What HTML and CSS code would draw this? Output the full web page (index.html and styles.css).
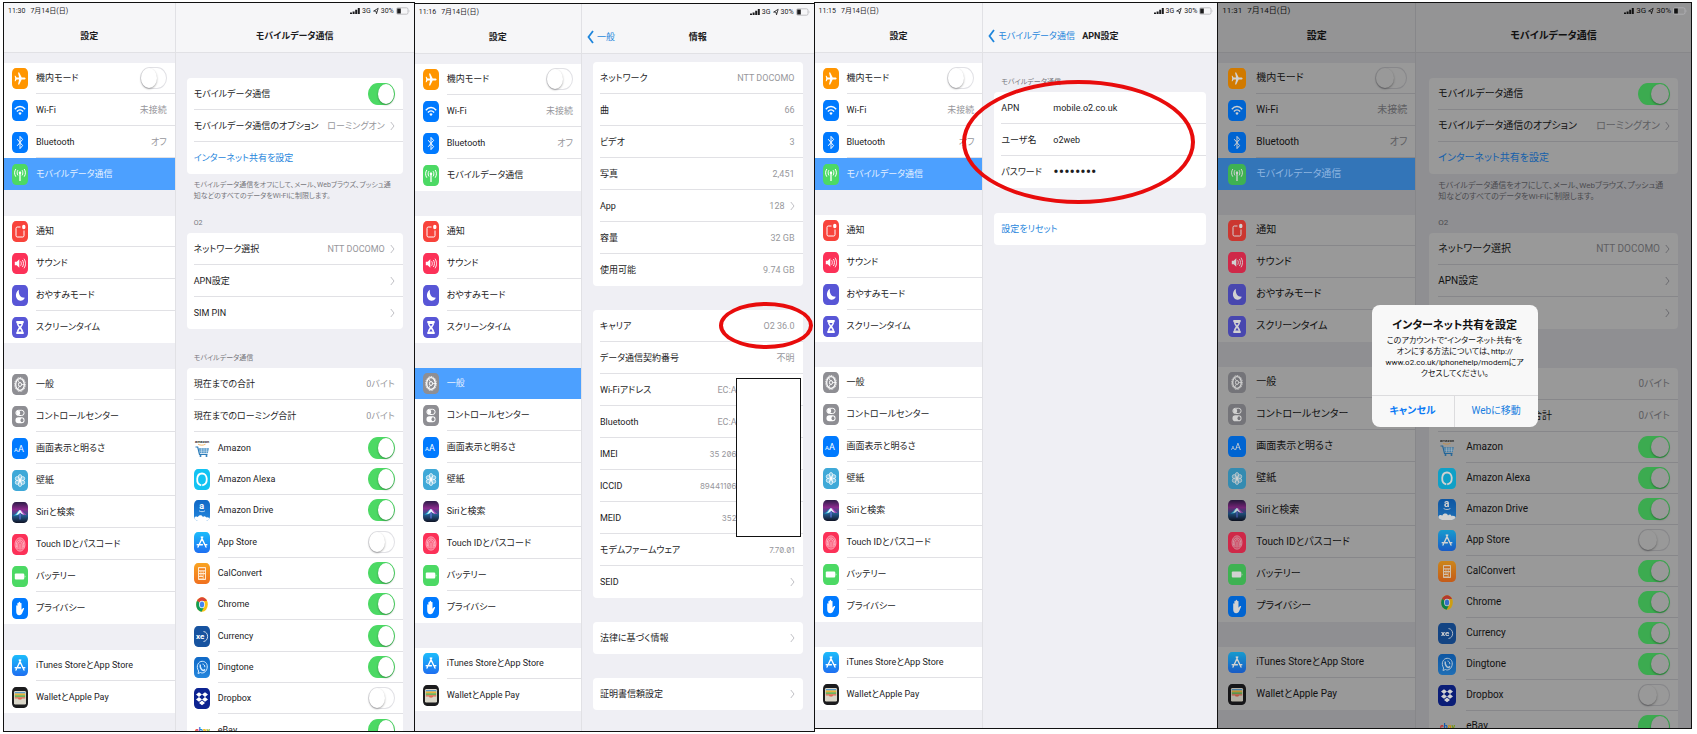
FILE: index.html
```
<!DOCTYPE html>
<html lang="ja">
<head>
    <meta charset="UTF-8">
    <meta name="viewport" content="width=device-width, initial-scale=1.0">
    <title>APN設定</title>
    <link rel="stylesheet" href="styles.css">
</head>
<body>
    <!-- icon glyphs, the coloured tile behind each one is in the css -->
    <svg class="sprite" aria-hidden="true">
        <symbol id="plane" viewBox="0 0 16 21"><path fill="#fff" d="M13.6 10.5c0 .7-.8 1-1.6 1H9.7L7.2 16.5H6l1.1-5H4.6l-1.1 1.7h-.8l.5-2.7-.5-2.7h.8l1.1 1.7h2.5l-1.1-5h1.2l2.5 5H12c.8 0 1.6.3 1.6 1z"/></symbol>
        <symbol id="wifi" viewBox="0 0 16 21"><g fill="none" stroke="#fff" stroke-width="1.4"><path d="M2.8 9.2c3.1-3.6 7.3-3.6 10.4 0"/><path d="M4.9 11.5c1.9-2.2 4.3-2.2 6.2 0"/></g><path fill="#fff" d="M6.4 13.1c1-1 2.2-1 3.2 0L8 15.2z"/></symbol>
        <symbol id="bluetooth" viewBox="0 0 16 21"><path fill="none" stroke="#fff" d="M5.2 7.2l5.4 6.4-2.6 3V4.4l2.6 3-5.4 6.4"/></symbol>
        <symbol id="antenna" viewBox="0 0 16 21"><g fill="none" stroke="#fff"><path d="M8 9.5V17" stroke-width="1.3"/><path d="M5.9 6.2c-1 1.6-1 3.6 0 5.2M10.1 6.2c1 1.6 1 3.6 0 5.2M3.8 5c-1.6 2.5-1.6 5.2 0 7.7M12.2 5c1.6 2.5 1.6 5.2 0 7.7"/></g><ellipse cx="8" cy="8.8" rx="1.2" ry="1.5" fill="#fff"/></symbol>
        <symbol id="notice" viewBox="0 0 16 21"><path fill="none" stroke="#fff" d="M8.5 6H5.2c-.7 0-1.2.5-1.2 1.4v7.2c0 .9.5 1.4 1.2 1.4h5.6c.7 0 1.2-.5 1.2-1.400V9.500"/><ellipse cx="11.8" cy="6" rx="1.7" ry="2.2" fill="#fff"/></symbol>
        <symbol id="sound" viewBox="0 0 16 21"><path fill="#fff" d="M2.8 8.8h1.9l2.6-2.6v8.6l-2.6-2.6H2.8z"/><path fill="none" stroke="#fff" stroke-width=".9" d="M8.7 8.3c.8 1.4.8 3 0 4.4M10.4 7c1.4 2.2 1.4 4.8 0 7M12 5.7c2 3 2 6.600 0 9.600"/></symbol>
        <symbol id="moon" viewBox="0 0 16 21"><path fill="#fff" d="M6.9 4.8c-.6 4.6 1.4 8.1 5.9 8-.9 2.3-2.6 3.2-4.6 3C3.4 15.2 2.2 8 6.9 4.8z"/></symbol>
        <symbol id="hourglass" viewBox="0 0 16 21"><path fill="#fff" d="M4.3 4h7.4v2.2h-.8v1.6l-1.7 2.7 1.7 2.7v1.6h.8V17H4.3v-2.2h.8v-1.6l1.7-2.7-1.7-2.7V6.2h-.8z"/><path fill="#5856d6" d="M6.4 7h3.2L8 9.6zM8 11.8l1.7 2.8H6.3z"/></symbol>
        <symbol id="gear" viewBox="0 0 16 21"><g fill="none" stroke="#fff"><ellipse cx="8" cy="10.5" rx="5.3" ry="7" stroke-dasharray="1 .8"/><ellipse cx="8" cy="10.5" rx="4.3" ry="5.8" stroke-width="1.3"/><ellipse cx="8" cy="10.5" rx="1.5" ry="2"/><path d="M9.5 10.5h2.8M7.2 8.7L5.8 5.8M7.2 12.3l-1.4 2.9" stroke-width=".8"/></g></symbol>
        <symbol id="control" viewBox="0 0 16 21"><rect x="3.9" y="4.3" width="8.2" height="5.2" rx="2.5" fill="none" stroke="#fff"/><ellipse cx="6.2" cy="6.9" rx="2" ry="2.4" fill="#fff"/><rect x="3.5" y="11.3" width="9" height="6" rx="2.8" fill="#fff"/><ellipse cx="10" cy="14.3" rx="1.5" ry="2" fill="#8e8e93"/></symbol>
        <symbol id="wallpaper" viewBox="0 0 16 21"><g fill="#fff" fill-opacity=".35" stroke="#fff" stroke-width=".7"><ellipse cx="8" cy="6.8" rx="1.7" ry="2.3"/><ellipse cx="8" cy="14.2" rx="1.7" ry="2.3"/><ellipse cx="5.2" cy="8.6" rx="1.9" ry="2"/><ellipse cx="10.8" cy="8.6" rx="1.9" ry="2"/><ellipse cx="5.2" cy="12.4" rx="1.9" ry="2"/><ellipse cx="10.8" cy="12.4" rx="1.9" ry="2"/></g><ellipse cx="8" cy="10.5" rx="1.3" ry="1.7" fill="#fff"/></symbol>
        <symbol id="siri" viewBox="0 0 16 21"><path fill="#22c3e8" opacity=".8" d="M1 13.5c3-.5 4.5-5 7-5.5 1.5 2 0 6-7 5.5z"/><path fill="#d94ad0" opacity=".8" d="M8 8c2.5 0 3.5 3.5 6.5 4.5-3 .7-5.5 0-6.5-4.500z"/><path fill="#e9fbff" d="M3.5 12.8c2-.5 3-4.5 4.5-4.800 1.300.6 2 3.600 4 4.500-1.700.3-2.800-.8-3.600-1.700-1.200 1.300-2.900 2.300-4.900 2z"/><path stroke="#6d7ef0" d="M8 11.5v6"/></symbol>
        <symbol id="touch" viewBox="0 0 16 21"><g fill="none" stroke="#ffb9c6" stroke-width=".8"><ellipse cx="8" cy="10.5" rx="5" ry="6.7"/><path d="M4.6 13.5c-.8-5 .7-7.5 3.4-7.5s4.2 2.5 3.6 7.5M6.1 15c-1-5 0-7.2 1.9-7.2s2.7 2.2 2 7.4M8 9.7v5.8"/></g><ellipse cx="8" cy="10.5" rx="4.8" ry="6.5" fill="#fff" opacity=".2"/></symbol>
        <symbol id="battery" viewBox="0 0 16 21"><rect x="2.8" y="7.6" width="9.4" height="5.8" rx="1" fill="#fff"/><path fill="#fff" d="M12.7 9.3c.9.3.9 2.1 0 2.4z"/></symbol>
        <symbol id="hand" viewBox="0 0 16 21"><path fill="#fff" d="M4.2 8c0-1 1.1-1 1.2 0V5.5c0-1 1.2-1 1.3 0V4.4c0-1 1.3-1 1.4 0v1c0-1 1.3-1 1.4 0v6.3l1.3-1.5c.8-.6 1.7 0 1.2.9L10 15.5c-.7 1.3-1.5 1.7-2.7 1.7-2 0-3.1-1.6-3.1-4z"/></symbol>
        <symbol id="store" viewBox="0 0 16 21"><g fill="none" stroke="#fff" stroke-width="1.4" stroke-linecap="round"><path d="M8.7 5L5 13M7.3 5L11 13M3.2 12.7h5.2M10.7 12.7h2.1M4 15l.4-.8M12 15l-.4-.8"/></g></symbol>
        <symbol id="wallet" viewBox="0 0 16 21"><rect x="2" y="4" width="12" height="13.5" rx="1.2" fill="#d9d6c8"/><path fill="#5a9bc9" d="M2.8 5h10.4v1.6H2.8z"/><path fill="#e8b33a" d="M2.8 6.6h10.4v2H2.8z"/><path fill="#6fb35a" d="M2.8 8.2h10.4v2H2.8z"/><path fill="#e46a52" d="M2.8 10.2h10.4v1.4H10c-.5 1.6-3.5 1.6-4 0H2.8z"/></symbol>

        <symbol id="alexa" viewBox="0 0 16 21"><path fill="none" stroke="#fff" stroke-width="1.8" d="M7.3 16.4C1.3 15 2.2 4.5 8 4.5s6.8 10.3.2 11.8"/></symbol>
        <symbol id="calc" viewBox="0 0 16 21"><rect x="4" y="4" width="8" height="13" rx=".8" fill="#ffe9cf"/><path fill="#f38320" d="M5 5.2h6v2H5zM5 8.5h1.6V10H5zM7.3 8.5h1.5V10H7.3zM9.5 8.5H11V10H9.5zM5 11.2h1.6v1.5H5zM7.3 11.2h1.5v1.5H7.3zM9.5 11.2H11v4.5H9.5zM5 14h3.8v1.6H5z"/></symbol>
        <symbol id="chrome" viewBox="0 0 16 21"><ellipse cx="8" cy="10.5" rx="5.8" ry="7.3" fill="#fbc116"/><path fill="#db4437" d="M8 10.5L3 6.8C5.5 2 10.8 2 13 7H8z"/><path fill="#0f9d58" d="M3 6.8c-2 4.5-.2 10.3 4.6 11L10 13l-2-2.5z"/><ellipse cx="8" cy="10.5" rx="2.9" ry="3.7" fill="#fff"/><ellipse cx="8" cy="10.5" rx="2.2" ry="2.9" fill="#4285f4"/></symbol>
        <symbol id="dingtone" viewBox="0 0 16 21"><g fill="none" stroke="#d8ecff"><path d="M4 16.5l.6-2.5C1.5 9 4.5 4.3 8.2 4.3S14 7.5 13 11.5s-4.5 5.2-6.5 4z"/><path stroke-width="1.5" d="M6.3 7.5c-.6 3 1.2 5.8 3.6 6l1-1.2"/><path d="M8.5 7c1.5.2 2.4 1.5 2.3 3.2"/></g></symbol>
        <symbol id="dropbox" viewBox="0 0 16 21"><path fill="#fff" d="M5 4.2L8 6.6 5 9 2 6.6zM11 4.2l3 2.4L11 9 8 6.6zM5 9l3 2.4-3 2.4-3-2.4zM11 9l3 2.4-3 2.4-3-2.4zM8 12.6l3 2.3-3 2.4-3-2.4z"/></symbol>

        <symbol id="chevron" viewBox="0 0 5 10"><path fill="none" stroke="currentColor" d="M.8 1L4 5 .8 9"/></symbol>
        <symbol id="back" viewBox="0 0 7 14"><path fill="none" stroke="currentColor" stroke-width="1.8" d="M6 1L1.5 7 6 13"/></symbol>
        <symbol id="signal" viewBox="0 0 10 8"><path fill="currentColor" d="M0 5.5h2V7H0zM2.6 4.5h2V7h-2zM5.2 2.8h2V7h-2zM7.8 1h2v6h-2z"/></symbol>
        <symbol id="arrow" viewBox="0 0 6 8"><path fill="none" stroke="currentColor" stroke-width=".8" d="M.6 4.1L5.2 1.3 3.5 6.8 3 4.1z"/></symbol>
        <symbol id="charge" viewBox="0 0 14 8"><rect x=".5" y=".8" width="11.5" height="6.4" rx="1.5" fill="none" stroke="#b4b4b8" stroke-width=".8"/><rect x="1.2" y="1.5" width="3.6" height="5" fill="currentColor"/><path fill="#b4b4b8" d="M12.8 3c.9.3.9 1.7 0 2z"/></symbol>
    </svg>

    <template id="statusTemplate">
        <svg class="signal"><use href="#signal"/></svg>
        <span>3G</span>
        <svg class="arrow"><use href="#arrow"/></svg>
        <span>30%</span>
        <svg class="charge"><use href="#charge"/></svg>
    </template>

    <template id="menuTemplate">
        <div class="group">
            <label class="row"><span class="icon orange"><svg><use href="#plane"/></svg></span><span class="body">機内モード<input type="checkbox" class="switch"></span></label>
            <a class="row" href="#"><span class="icon blue"><svg><use href="#wifi"/></svg></span><span class="body">Wi-Fi<span class="value">未接続</span></span></a>
            <a class="row" href="#"><span class="icon blue"><svg><use href="#bluetooth"/></svg></span><span class="body">Bluetooth<span class="value">オフ</span></span></a>
            <a class="row" href="#" data-page="mobile"><span class="icon green"><svg><use href="#antenna"/></svg></span><span class="body">モバイルデータ通信</span></a>
        </div>
        <div class="group">
            <a class="row" href="#"><span class="icon red"><svg><use href="#notice"/></svg></span><span class="body">通知</span></a>
            <a class="row" href="#"><span class="icon pink"><svg><use href="#sound"/></svg></span><span class="body">サウンド</span></a>
            <a class="row" href="#"><span class="icon purple"><svg><use href="#moon"/></svg></span><span class="body">おやすみモード</span></a>
            <a class="row" href="#"><span class="icon purple"><svg><use href="#hourglass"/></svg></span><span class="body">スクリーンタイム</span></a>
        </div>
        <div class="group">
            <a class="row" href="#" data-page="general"><span class="icon gray"><svg><use href="#gear"/></svg></span><span class="body">一般</span></a>
            <a class="row" href="#"><span class="icon gray"><svg><use href="#control"/></svg></span><span class="body">コントロールセンター</span></a>
            <a class="row" href="#"><span class="icon blue"><svg viewBox="0 0 16 21"><text x="2" y="14" fill="#fff" font-size="9"><tspan font-size="6">A</tspan>A</text></svg></span><span class="body">画面表示と明るさ</span></a>
            <a class="row" href="#"><span class="icon sky"><svg><use href="#wallpaper"/></svg></span><span class="body">壁紙</span></a>
            <a class="row" href="#"><span class="icon siri"><svg><use href="#siri"/></svg></span><span class="body">Siriと検索</span></a>
            <a class="row" href="#"><span class="icon pink"><svg><use href="#touch"/></svg></span><span class="body">Touch IDとパスコード</span></a>
            <a class="row" href="#"><span class="icon green"><svg><use href="#battery"/></svg></span><span class="body">バッテリー</span></a>
            <a class="row" href="#"><span class="icon blue"><svg><use href="#hand"/></svg></span><span class="body">プライバシー</span></a>
        </div>
        <div class="group">
            <a class="row" href="#"><span class="icon store"><svg><use href="#store"/></svg></span><span class="body">iTunes StoreとApp Store</span></a>
            <a class="row" href="#"><span class="icon black"><svg><use href="#wallet"/></svg></span><span class="body">WalletとApple Pay</span></a>
        </div>
    </template>

    <template id="mobileTemplate">
        <div class="card">
            <label class="row"><span class="body">モバイルデータ通信<input type="checkbox" class="switch" checked></span></label>
            <a class="row" href="#"><span class="body">モバイルデータ通信のオプション<span class="value">ローミングオン</span><svg class="chevron"><use href="#chevron"/></svg></span></a>
            <a class="row link" href="#"><span class="body">インターネット共有を設定</span></a>
        </div>
        <p class="note">モバイルデータ通信をオフにして、メール、Webブラウズ、プッシュ通<br>知などのすべてのデータをWi-Fiに制限します。</p>
        <h3 class="carrier">O2</h3>
        <div class="card">
            <a class="row" href="#"><span class="body">ネットワーク選択<span class="value">NTT DOCOMO</span><svg class="chevron"><use href="#chevron"/></svg></span></a>
            <a class="row" href="#"><span class="body">APN設定<svg class="chevron"><use href="#chevron"/></svg></span></a>
            <a class="row" href="#"><span class="body">SIM PIN<svg class="chevron"><use href="#chevron"/></svg></span></a>
        </div>
        <h3 class="usage">モバイルデータ通信</h3>
        <div class="card">
            <div class="row"><span class="body">現在までの合計<span class="value">0バイト</span></span></div>
            <div class="row"><span class="body">現在までのローミング合計<span class="value">0バイト</span></span></div>
            <label class="row app"><span class="icon"><svg viewBox="0 0 16 21"><text x="1" y="5" font-size="4" font-weight="bold" fill="#333">amazon</text><path fill="none" stroke="#f3a847" stroke-width=".8" d="M4 6.2c2.500 1.300 5 1.300 7.500 0"/><path fill="none" stroke="#2b7bb9" stroke-width="1.2" d="M1.500 9h2.200l1.800 7.500h8"/><path fill="#4b93c7" d="M4.500 10.300H15l-1.200 5H5.600z"/><path stroke="#fff" stroke-width=".4" d="M5 12h9.500M5.500 13.700h9M7.500 10.300v5M10 10.300v5M12.500 10.300v5"/><circle cx="6.500" cy="18" r="1" fill="#2b7bb9"/><circle cx="12.500" cy="18" r="1" fill="#2b7bb9"/></svg></span><span class="body">Amazon<input type="checkbox" class="switch" checked></span></label>
            <label class="row app"><span class="icon cyan"><svg><use href="#alexa"/></svg></span><span class="body">Amazon Alexa<input type="checkbox" class="switch" checked></span></label>
            <label class="row app"><span class="icon drive"><svg viewBox="0 0 16 21" preserveAspectRatio="xMidYMax slice"><text x="5.300" y="9" fill="#fff" font-size="9" font-weight="bold">a</text><path fill="none" stroke="#fff" stroke-width=".7" d="M5 10.800c2 1.200 4 1.200 6 0"/><path fill="#fff" d="M0 21v-2.500c1-2.500 2.700-2.300 3.900-1.500 1-2.300 4.200-2.300 5 0 1.300-1.500 2.800-.8 3.200.6 1.500-.8 3.300.2 3.900 1.400v2z"/></svg></span><span class="body">Amazon Drive<input type="checkbox" class="switch" checked></span></label>
            <label class="row app"><span class="icon store"><svg><use href="#store"/></svg></span><span class="body">App Store<input type="checkbox" class="switch"></span></label>
            <label class="row app"><span class="icon calc"><svg><use href="#calc"/></svg></span><span class="body">CalConvert<input type="checkbox" class="switch" checked></span></label>
            <label class="row app"><span class="icon"><svg><use href="#chrome"/></svg></span><span class="body">Chrome<input type="checkbox" class="switch" checked></span></label>
            <label class="row app"><span class="icon xe"><svg viewBox="0 0 16 21"><text x="2" y="13" fill="#fff" font-size="8" font-weight="bold">xe</text><path fill="none" stroke="#fff" stroke-width=".8" d="M9.500 5.500c5.500.5 5.500 9.500 0 10"/></svg></span><span class="body">Currency<input type="checkbox" class="switch" checked></span></label>
            <label class="row app"><span class="icon drive"><svg><use href="#dingtone"/></svg></span><span class="body">Dingtone<input type="checkbox" class="switch" checked></span></label>
            <label class="row app"><span class="icon navy"><svg><use href="#dropbox"/></svg></span><span class="body">Dropbox<input type="checkbox" class="switch"></span></label>
            <label class="row app"><span class="icon"><svg viewBox="0 0 16 21"><text x="1" y="13" font-size="7" font-weight="bold"><tspan fill="#e53238">e</tspan><tspan fill="#0064d2">b</tspan><tspan fill="#f5af02">a</tspan><tspan fill="#86b817">y</tspan></text></svg></span><span class="body">eBay<input type="checkbox" class="switch" checked></span></label>
        </div>
    </template>

    <main class="shots">
        <section class="shot first" data-active="mobile">
            <nav class="sidebar">
                <header><div class="status"><span>11:30</span><span>7月14日(日)</span></div><div class="title"><h2>設定</h2></div></header>
                <div class="menu"></div>
            </nav>
            <div class="detail">
                <header><div class="status right"></div><div class="title"><h2>モバイルデータ通信</h2></div></header>
                <div class="content mobile"></div>
            </div>
        </section>

        <section class="shot second" data-active="general">
            <nav class="sidebar">
                <header><div class="status"><span>11:16</span><span>7月14日(日)</span></div><div class="title"><h2>設定</h2></div></header>
                <div class="menu"></div>
            </nav>
            <div class="detail">
                <header><div class="status right"></div><div class="title"><a class="back" href="#"><svg><use href="#back"/></svg>一般</a><h2>情報</h2></div></header>
                <div class="content about">
                    <div class="card">
                        <div class="row"><span class="body">ネットワーク<span class="value">NTT DOCOMO</span></span></div>
                        <div class="row"><span class="body">曲<span class="value">66</span></span></div>
                        <div class="row"><span class="body">ビデオ<span class="value">3</span></span></div>
                        <div class="row"><span class="body">写真<span class="value">2,451</span></span></div>
                        <a class="row" href="#"><span class="body">App<span class="value">128</span><svg class="chevron"><use href="#chevron"/></svg></span></a>
                        <div class="row"><span class="body">容量<span class="value">32 GB</span></span></div>
                        <div class="row"><span class="body">使用可能<span class="value">9.74 GB</span></span></div>
                    </div>
                    <div class="card">
                        <div class="row"><span class="body">キャリア<span class="value">O2 36.0</span></span></div>
                        <div class="row"><span class="body">データ通信契約番号<span class="value">不明</span></span></div>
                        <div class="row"><span class="body">Wi-Fiアドレス<span class="value masked">EC:A</span></span></div>
                        <div class="row"><span class="body">Bluetooth<span class="value masked">EC:A</span></span></div>
                        <div class="row"><span class="body">IMEI<span class="value number masked">35 206</span></span></div>
                        <div class="row"><span class="body">ICCID<span class="value number masked">89441106</span></span></div>
                        <div class="row"><span class="body">MEID<span class="value number masked">352</span></span></div>
                        <div class="row"><span class="body">モデムファームウェア<span class="value number">7.70.01</span></span></div>
                        <a class="row" href="#"><span class="body">SEID<svg class="chevron"><use href="#chevron"/></svg></span></a>
                    </div>
                    <div class="card">
                        <a class="row" href="#"><span class="body">法律に基づく情報<svg class="chevron"><use href="#chevron"/></svg></span></a>
                    </div>
                    <div class="card">
                        <a class="row" href="#"><span class="body">証明書信頼設定<svg class="chevron"><use href="#chevron"/></svg></span></a>
                    </div>
                </div>
            </div>
            <div class="mask"></div>
            <div class="ring carrier-ring"></div>
        </section>

        <section class="shot third" data-active="mobile">
            <nav class="sidebar">
                <header><div class="status"><span>11:15</span><span>7月14日(日)</span></div><div class="title"><h2>設定</h2></div></header>
                <div class="menu"></div>
            </nav>
            <div class="detail">
                <header><div class="status right"></div><div class="title"><a class="back" href="#"><svg><use href="#back"/></svg>モバイルデータ通信</a><h2>APN設定</h2></div></header>
                <div class="content apn">
                    <h3>モバイルデータ通信</h3>
                    <div class="card">
                        <label class="row"><span class="body"><span class="name">APN</span><input type="text" value="mobile.o2.co.uk"></span></label>
                        <label class="row"><span class="body"><span class="name">ユーザ名</span><input type="text" value="o2web"></span></label>
                        <label class="row"><span class="body"><span class="name">パスワード</span><input type="password" value="password"></span></label>
                    </div>
                    <div class="card">
                        <button type="button" class="row link"><span class="body">設定をリセット</span></button>
                    </div>
                </div>
            </div>
            <div class="ring apn-ring"></div>
        </section>

        <section class="shot fourth" data-active="mobile">
            <nav class="sidebar">
                <header><div class="status"><span>11:31</span><span>7月14日(日)</span></div><div class="title"><h2>設定</h2></div></header>
                <div class="menu"></div>
            </nav>
            <div class="detail">
                <header><div class="status right"></div><div class="title"><h2>モバイルデータ通信</h2></div></header>
                <div class="content mobile"></div>
            </div>
            <dialog class="alert" open>
                <h2>インターネット共有を設定</h2>
                <p>このアカウントで“インターネット共有”を<br>オンにする方法については、http://<br>www.o2.co.uk/iphonehelp/modemにア<br>クセスしてください。</p>
                <div class="buttons">
                    <button type="button" class="cancel">キャンセル</button>
                    <button type="button">Webに移動</button>
                </div>
            </dialog>
        </section>
    </main>

    <script>
        function fill(selector, templateId) {
            var template = document.getElementById(templateId);
            document.querySelectorAll(selector).forEach(function(el) {
                el.appendChild(template.content.cloneNode(true));
            });
        }

        fill(".menu", "menuTemplate");
        fill(".mobile", "mobileTemplate");
        fill(".status.right", "statusTemplate");

        // highlight the open page in each sidebar
        document.querySelectorAll(".shot").forEach(function(shot) {
            shot.querySelector('[data-page="' + shot.dataset.active + '"]').classList.add("active");
        });
    </script>
</body>
</html>
```
FILE: styles.css
```
* {
    box-sizing: border-box;
}
body {
    margin: 0;
    background-color: #fff;
    font-family: Roboto, "Noto Sans CJK JP", sans-serif;
    font-feature-settings: "palt";
}
h2, h3, p {
    margin: 0;
}
a {
    color: inherit;
    text-decoration: none;
}
.sprite {
    position: absolute;
    width: 0;
    height: 0;
}
.shots {
    display: grid;
    grid-template-columns: 411fr 400fr 404fr 474fr;
    height: 100vh;
    padding: 2px 5px 2px 4px;
}

/* one iPad screen */
.shot {
    --page: #efeff4;
    --bar: #f6f6f8;
    --card: #fff;
    --line: #e1e1e5;
    --text: #1c1c1e;
    --muted: #97979c;
    --link: #1f86dc;
    --select: #4ca0ff;
    --select-text: #e4f0ff;
    --on: #4cd964;
    --side: 11px;
    --icon: 16px;
    --gap: 8px;
    --switch: 27px;
    --knob: 16px;
    position: relative;
    display: grid;
    grid-template-columns: 5fr 7fr;
    min-width: 0;
    margin-left: -1px;
    border: 1px solid #111;
    overflow: hidden;
    background-color: var(--page);
    color: var(--text);
    font-size: 9px;
    line-height: 12px;
}
.second {
    margin-top: 1px;
}
.third, .fourth {
    margin-bottom: 3px;
}
.fourth {
    --page: #8f8f92;
    --bar: #949495;
    --card: #999;
    --line: #87878a;
    --text: #111;
    --muted: #5e5e62;
    --link: #1560ab;
    --select: #3375b8;
    --select-text: #8cb4e0;
    --on: #3cab50;
    --side: 13px;
    --icon: 18px;
    --gap: 10px;
    --switch: 32px;
    --knob: 18px;
    font-size: 10px;
}
.sidebar, .detail {
    min-width: 0;
    min-height: 0;
    overflow: hidden;
}
.detail {
    border-left: 1px solid var(--line);
}
header {
    height: 50px;
    background-color: var(--bar);
    border-bottom: 1px solid var(--line);
}
.status {
    display: flex;
    align-items: center;
    gap: 5px;
    height: 16px;
    padding: 0 4px;
    font-size: 7px;
    line-height: 8px;
}
.status.right {
    justify-content: flex-end;
    gap: 2px;
}
.status svg {
    flex: none;
}
.fourth .status {
    font-size: 8px;
}
.signal {
    width: 10px;
    height: 8px;
}
.arrow {
    width: 6px;
    height: 8px;
}
.charge {
    width: 14px;
    height: 8px;
}
.title {
    display: grid;
    grid-template-columns: 1fr auto 1fr;
    align-items: center;
    height: 33px;
    padding: 0 5px;
}
.title h2 {
    grid-column: 2;
    font-size: inherit;
    font-weight: bold;
}
.back {
    display: flex;
    align-items: center;
    gap: 3px;
    color: var(--link);
    white-space: nowrap;
}
.back svg {
    width: 7px;
    height: 14px;
}

/* rows */
.menu {
    display: flex;
    flex-direction: column;
    gap: 25px;
    padding-top: 10px;
}
.first .menu {
    gap: 26px;
}
.group, .card {
    background-color: var(--card);
}
.row {
    display: flex;
    align-items: center;
    gap: var(--gap);
    width: 100%;
    height: 32px;
    padding: 0 0 0 var(--gap);
    border: none;
    background: none;
    color: var(--text);
    font: inherit;
    font-feature-settings: inherit;
    text-align: left;
    white-space: nowrap;
}
.card .row {
    padding-left: calc(var(--gap) - 1px);
}
.group .row:first-child, .row.app {
    height: 31px;
}
.first .app:nth-child(3n) {
    height: 32px;
}
.body {
    display: flex;
    flex: 1;
    align-items: center;
    align-self: stretch;
    gap: 5px;
    min-width: 0;
    padding-right: 8px;
    border-bottom: 1px solid var(--line);
}
.row:last-child .body, .active .body {
    border-bottom-color: transparent;
}
.row.active {
    background-color: var(--select);
    color: var(--select-text);
}
.row.link {
    color: var(--link);
}
.value {
    margin-left: auto;
    color: var(--muted);
}
.number {
    font-family: Inter, sans-serif;
    font-size: 8px;
    font-feature-settings: "zero";
}
.masked {
    margin-right: 58px;
}
.chevron {
    width: 5px;
    height: 10px;
    flex: none;
    margin-left: auto;
    color: #c0c0c5;
}
.value + .chevron {
    margin-left: 0;
}
.fourth .chevron {
    color: #6c6c70;
}

/* icon tiles */
.icon {
    flex: none;
    width: var(--icon);
    height: 21px;
    border-radius: 4px / 5px;
    overflow: hidden;
}
.icon svg {
    display: block;
    width: 100%;
    height: 100%;
}
.fourth .icon {
    filter: brightness(0.82);
}
.orange { background-color: #ff9500; }
.blue { background-color: #007aff; }
.green { background-color: #4cd964; }
.red { background-color: #f8433b; }
.pink { background-color: #fc3158; }
.purple { background-color: #5856d6; }
.gray { background-color: #8e8e93; }
.sky { background-color: #3fa9d8; }
.cyan { background-color: #12c3f3; }
.navy { background-color: #0c2391; }
.xe { background-color: #1753a0; }
.store { background-image: linear-gradient(#1cbcfb, #1e6ff1); }
.drive { background-image: linear-gradient(#0f68c6, #2587dd); }
.calc { background-image: linear-gradient(#f9a321, #f0701f); }
.siri { background-image: linear-gradient(#2b1c46, #8a2b8d 35%, #245b8e 65%, #101426); }
.black { background-color: #1b1b1d; }

/* switches */
.switch {
    appearance: none;
    display: flex;
    align-items: center;
    flex: none;
    width: var(--switch);
    height: 22px;
    margin: 0 0 0 auto;
    padding: 0;
    border: 1px solid var(--line);
    border-radius: 10px / 11px;
    background-color: var(--card);
}
.switch::before {
    content: "";
    width: var(--knob);
    height: 20px;
    flex: none;
    border-radius: 50%;
    background-color: var(--card);
    box-shadow: 0 1px 2px rgba(0, 0, 0, 0.35);
}
.switch:checked {
    justify-content: flex-end;
    border-color: var(--on);
    background-color: var(--on);
}

/* right side */
.content {
    padding: 0 var(--side);
}
.card {
    border-radius: 4px;
}
.content h3 {
    padding-left: 7px;
    color: #77777c;
    font-size: 7px;
    font-weight: normal;
    line-height: 10px;
}
.fourth .content h3, .fourth .note {
    color: #4b4b4f;
    font-size: 8px;
}
.fourth .content h3, .fourth .note {
    padding-left: 9px;
}
.mobile {
    padding-top: 25px;
}
.note {
    padding: 6px 0 0 7px;
    color: #77777c;
    font-size: 7px;
    line-height: 11px;
    white-space: nowrap;
}
.content .carrier {
    margin: 16px 0 5px;
}
.content .usage {
    margin: 24px 0 5px;
}
.about {
    display: flex;
    flex-direction: column;
    gap: 24px;
    padding-top: 8px;
}
.apn {
    padding-top: 24px;
}
.apn .card {
    margin: 5px 0 25px;
}
.name {
    width: 47px;
}
.body input[type="text"], .body input[type="password"] {
    flex: 1;
    min-width: 0;
    padding: 0;
    border: none;
    outline: none;
    background: none;
    color: inherit;
    font: inherit;
}
.body input[type="password"] {
    font-size: 16px;
}

/* red marks and the blanked out numbers */
.ring {
    position: absolute;
    border: 4px solid #e80c0c;
    border-radius: 50%;
}
.carrier-ring {
    top: 298px;
    right: 1px;
    width: 94px;
    height: 47px;
}
.apn-ring {
    top: 77px;
    right: 22px;
    width: 233px;
    height: 124px;
}
.mask {
    position: absolute;
    top: 374px;
    right: 13px;
    width: 65px;
    height: 159px;
    border: 1px solid #111;
    background-color: #fff;
}

.alert {
    position: absolute;
    inset: 0;
    width: 166px;
    height: fit-content;
    margin: auto;
    padding: 15px 0 0;
    border: none;
    border-radius: 8px;
    background-color: #f8f8f8;
    color: #111;
    text-align: center;
}
.alert h2 {
    font-size: 11px;
    line-height: 12px;
}
.alert p {
    padding: 3px 0 16px;
    font-size: 8px;
    line-height: 11px;
    white-space: nowrap;
}
.buttons {
    display: grid;
    grid-template-columns: 1fr 1fr;
    border-top: 1px solid #dcdcde;
}
.buttons button {
    height: 31px;
    padding: 0;
    border: none;
    background: none;
    color: #1a7fe0;
    font: inherit;
    font-feature-settings: inherit;
}
.buttons .cancel {
    border-right: 1px solid #dcdcde;
    color: #0a7af5;
    font-weight: bold;
}
```
